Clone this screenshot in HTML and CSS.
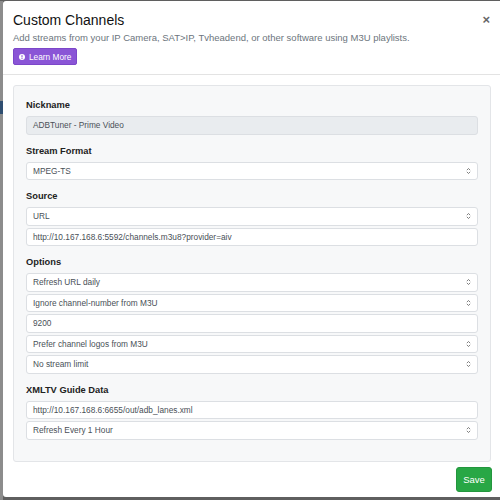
FILE: index.html
```html
<!DOCTYPE html>
<html lang="en">
<head>
    <meta charset="UTF-8">
    <title>Custom Channels</title>
    <link rel="stylesheet" href="styles.css">
</head>
<body>
    <!-- dimmed page behind the dialog -->
    <div class="backdrop">
        <div class="backdrop-strip"></div>

        <!-- Dialog -->
        <div class="modal">
            <div class="modal-header">
                <div class="header-top">
                    <h1>Custom Channels</h1>
                    <span class="close">&times;</span>
                </div>
                <p class="lead">Add streams from your IP Camera, SAT&gt;IP, Tvheadend, or other software using M3U playlists.</p>
                <a class="btn-learn" href="#">
                    <svg width="6" height="6" viewBox="0 0 8 8">
                        <circle cx="4" cy="4" r="4" fill="#fff"/>
                        <rect x="3.3" y="1.5" width="1.4" height="3" fill="#8a55d6"/>
                        <rect x="3.3" y="5.2" width="1.4" height="1.4" fill="#8a55d6"/>
                    </svg>
                    Learn More
                </a>
            </div>

            <div class="modal-body">
                <div class="card">
                    <div class="group">
                        <label>Nickname</label>
                        <div class="field disabled">ADBTuner - Prime Video</div>
                    </div>

                    <div class="group">
                        <label>Stream Format</label>
                        <div class="field select">MPEG-TS
                            <svg class="caret" width="5" height="8" viewBox="0 0 6 9"><path d="M1 3.5 3 1.5 5 3.5M1 5.5 3 7.5 5 5.5" fill="none" stroke="#666" stroke-width="1"/></svg>
                        </div>
                    </div>

                    <div class="group">
                        <label>Source</label>
                        <div class="field select">URL
                            <svg class="caret" width="5" height="8" viewBox="0 0 6 9"><path d="M1 3.5 3 1.5 5 3.5M1 5.5 3 7.5 5 5.5" fill="none" stroke="#666" stroke-width="1"/></svg>
                        </div>
                        <div class="field">http://10.167.168.6:5592/channels.m3u8?provider=aiv</div>
                    </div>

                    <div class="group">
                        <label>Options</label>
                        <div class="field select">Refresh URL daily
                            <svg class="caret" width="5" height="8" viewBox="0 0 6 9"><path d="M1 3.5 3 1.5 5 3.5M1 5.5 3 7.5 5 5.5" fill="none" stroke="#666" stroke-width="1"/></svg>
                        </div>
                        <div class="field select">Ignore channel-number from M3U
                            <svg class="caret" width="5" height="8" viewBox="0 0 6 9"><path d="M1 3.5 3 1.5 5 3.5M1 5.5 3 7.5 5 5.5" fill="none" stroke="#666" stroke-width="1"/></svg>
                        </div>
                        <div class="field">9200</div>
                        <div class="field select">Prefer channel logos from M3U
                            <svg class="caret" width="5" height="8" viewBox="0 0 6 9"><path d="M1 3.5 3 1.5 5 3.5M1 5.5 3 7.5 5 5.5" fill="none" stroke="#666" stroke-width="1"/></svg>
                        </div>
                        <div class="field select">No stream limit
                            <svg class="caret" width="5" height="8" viewBox="0 0 6 9"><path d="M1 3.5 3 1.5 5 3.5M1 5.5 3 7.5 5 5.5" fill="none" stroke="#666" stroke-width="1"/></svg>
                        </div>
                    </div>

                    <div class="group">
                        <label>XMLTV Guide Data</label>
                        <div class="field">http://10.167.168.6:6655/out/adb_lanes.xml</div>
                        <div class="field select">Refresh Every 1 Hour
                            <svg class="caret" width="5" height="8" viewBox="0 0 6 9"><path d="M1 3.5 3 1.5 5 3.5M1 5.5 3 7.5 5 5.5" fill="none" stroke="#666" stroke-width="1"/></svg>
                        </div>
                    </div>
                </div>
            </div>

            <div class="modal-footer">
                <button class="btn-save">Save</button>
            </div>
        </div>
    </div>
</body>
</html>
```

FILE: styles.css
```css
/* General */
html, body {
    margin: 0;
    padding: 0;
    height: 100%;
}
body {
    font-family: 'Liberation Sans', Arial, sans-serif;
    background-color: #5f5f5f;
    color: #212529;
}

/* Backdrop */
.backdrop {
    display: flex;
    height: 500px;
    padding-top: 1px;
    box-sizing: border-box;
}
.backdrop-strip {
    width: 3px;
    flex-shrink: 0;
    background: linear-gradient(to bottom,
        #8c8c8c 0, #8c8c8c 100px,
        #2f4e70 100px, #2f4e70 113px,
        #8c8c8c 113px, #8c8c8c 100%);
}

/* Dialog */
.modal {
    flex: 1;
    height: 496px;
    background-color: #fff;
    border-radius: 3px 0 0 3px;
    display: flex;
    flex-direction: column;
}

.modal-header {
    padding: 9px 9px 9px 10px;
    border-bottom: 1px solid #e3e3e3;
    display: flex;
    flex-direction: column;
    align-items: flex-start;
}
.header-top {
    align-self: stretch;
    display: flex;
    justify-content: space-between;
    align-items: center;
}
.modal-header h1 {
    margin: 0;
    font-size: 14px;
    font-weight: normal;
    line-height: 20px;
    color: #111;
}
.close {
    font-size: 13px;
    font-weight: bold;
    color: #666;
    line-height: 20px;
    margin-right: 1px;
}
.lead {
    margin: 1px 0 3px;
    font-size: 9.5px;
    line-height: 14px;
    color: #6c757d;
}
.btn-learn {
    display: flex;
    align-items: center;
    gap: 4px;
    height: 17px;
    padding: 0 5px 0 5px;
    box-sizing: border-box;
    background-color: #8a55d6;
    border: 1px solid #7c47c9;
    border-radius: 2px;
    color: #fff;
    font-size: 8.3px;
    text-decoration: none;
}

/* Body */
.modal-body {
    padding: 10px 9px 0 10px;
}
.card {
    background-color: #f7f8f9;
    border: 1px solid #e3e5e8;
    border-radius: 3px;
    padding: 12px 12px 21px 12px;
    display: flex;
    flex-direction: column;
    gap: 9px;
}
.group {
    display: flex;
    flex-direction: column;
    gap: 2px;
}
.group label {
    font-size: 9.3px;
    font-weight: bold;
    line-height: 14px;
    margin-bottom: 2px;
    color: #222;
}
.field {
    height: 18.5px;
    box-sizing: border-box;
    border: 1px solid #dcdfe3;
    border-radius: 3px;
    background-color: #fff;
    padding: 0 6px;
    font-size: 8.3px;
    color: #495057;
    display: flex;
    align-items: center;
    justify-content: space-between;
}
.field.disabled {
    background-color: #e9ecef;
}

/* Footer */
.modal-footer {
    display: flex;
    justify-content: flex-end;
    padding: 5px 8px 0 0;
}
.btn-save {
    width: 36px;
    height: 25px;
    background-color: #28a745;
    border: 1px solid #23963d;
    border-radius: 3px;
    color: #fff;
    font-family: inherit;
    font-size: 9.5px;
    padding: 0;
}
```
